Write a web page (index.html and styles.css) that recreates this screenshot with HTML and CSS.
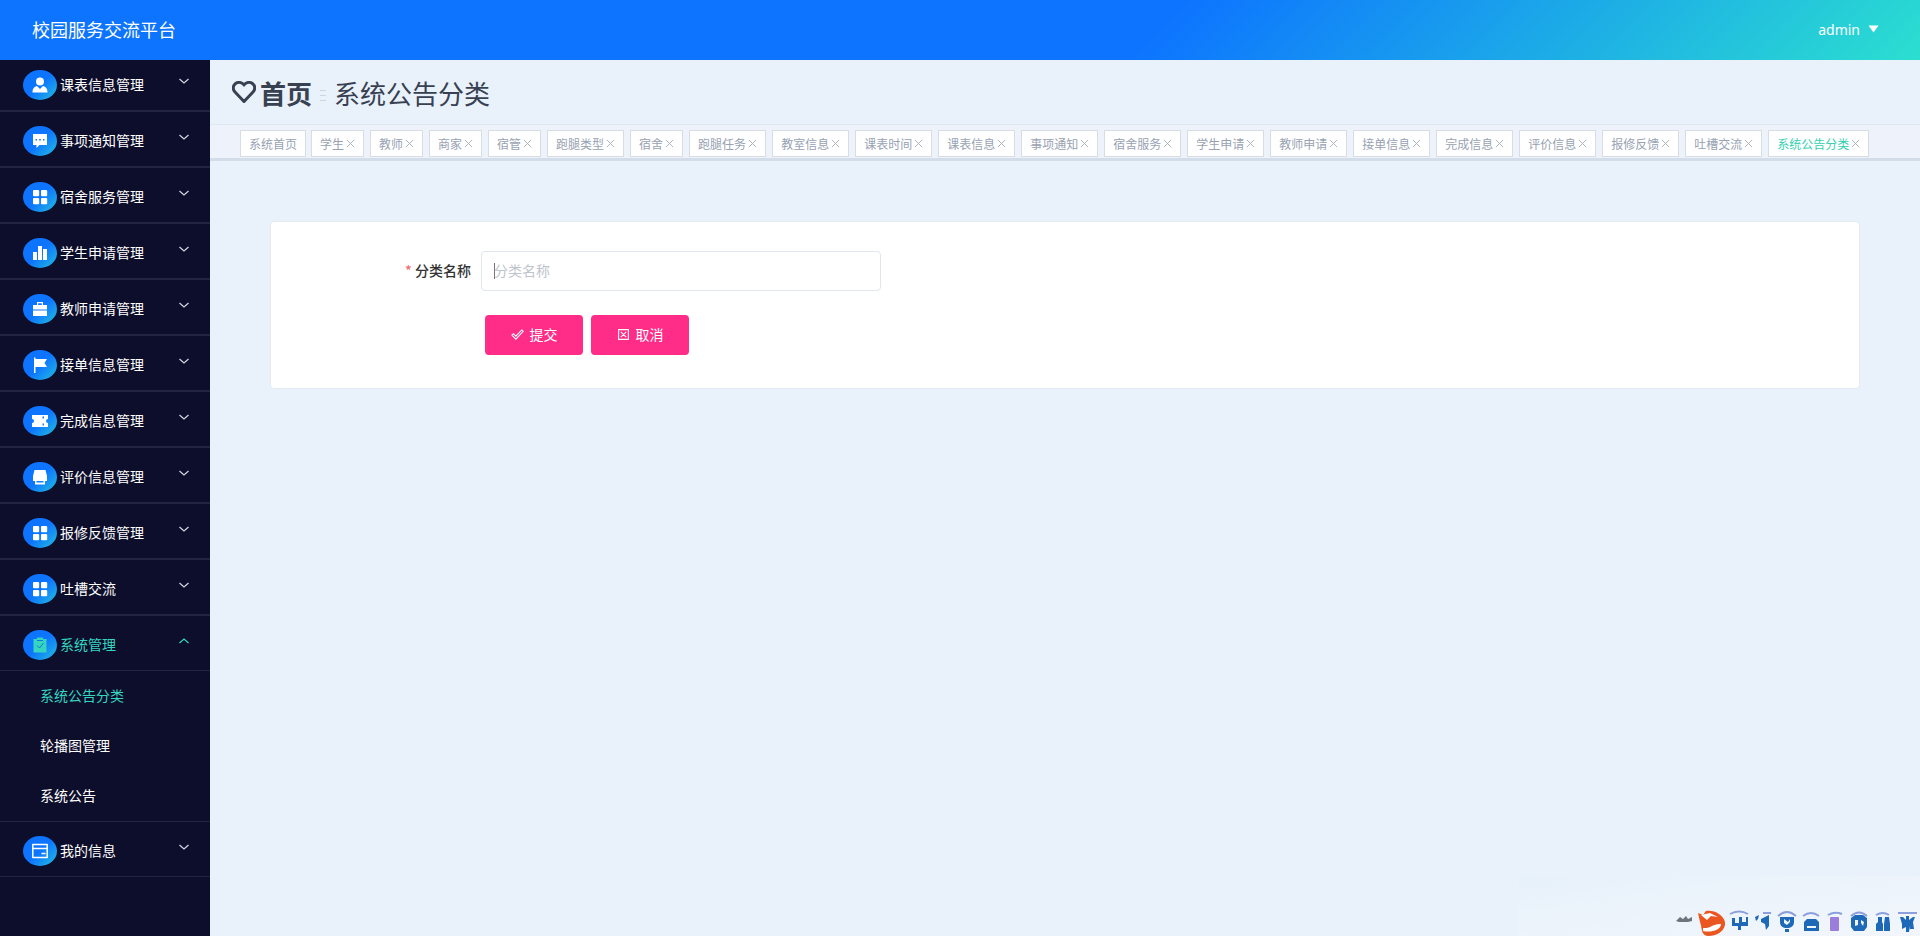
FILE: index.html
```html
<!DOCTYPE html>
<html lang="zh">
<head>
  <meta charset="UTF-8">
  <title>校园服务交流平台</title>
  <link rel="stylesheet" href="styles.css">
</head>
<body>
  <svg class="sprite">
    <symbol id="i-down" viewBox="0 0 12 12"><path d="M1.5 4 6 8 10.5 4" fill="none" stroke="currentColor" stroke-width="1.2"/></symbol>
    <symbol id="i-up" viewBox="0 0 12 12"><path d="M1.5 8 6 4 10.5 8" fill="none" stroke="currentColor" stroke-width="1.2"/></symbol>
    <symbol id="i-user" viewBox="0 0 16 16"><circle cx="8" cy="4.5" r="4"/><path d="M.5 15.500c0-4 2-6 4.500-6.500l3 3 3-3c2.500.5 4.500 2.500 4.500 6.500z"/></symbol>
    <symbol id="i-chat" viewBox="0 0 16 16"><path fill-rule="evenodd" d="M1 1h14v11H7.500L4.500 15v-3H1zM3.500 6v1.500H5V6zm3.700 0v1.500h1.600V6zM11 6v1.500h1.500V6z"/></symbol>
    <symbol id="i-grid" viewBox="0 0 16 16"><rect x="1" y="1" width="6.2" height="6.2" rx="1"/><rect x="9" y="1" width="6.2" height="6.2" rx="1"/><rect x="1" y="9" width="6.2" height="6.2" rx="1"/><rect x="9" y="9" width="6.2" height="6.2" rx="1"/></symbol>
    <symbol id="i-chart" viewBox="0 0 16 16"><path d="M1 7h4v8H1zM6 1h4v14H6zM11 4h4v11h-4z"/></symbol>
    <symbol id="i-bag" viewBox="0 0 16 16"><path fill-rule="evenodd" d="M5 1h6v3h4v4.500H1V4h4zm1.200 1.200V4h3.600V2.200zM1 9.500h14V15H1z"/></symbol>
    <symbol id="i-flag" viewBox="0 0 16 16"><path d="M2 .5h1.500V2H15l-2.500 4L15 10H3.500v6H2z"/></symbol>
    <symbol id="i-ticket" viewBox="0 0 16 16"><path fill-rule="evenodd" d="M0 2h16v4a2 2 0 0 0 0 4v4H0v-4a2 2 0 0 0 0-4zm10.500 1.500v2H12v-2zm0 7v2H12v-2z"/></symbol>
    <symbol id="i-print" viewBox="0 0 16 16"><path fill-rule="evenodd" d="M2.500 1h11L15 7v5h-2v3.500H3V12H1V7zM4.500 12v1.500h7V12z"/></symbol>
    <symbol id="i-claim" viewBox="0 0 16 16"><path d="M1.500 2H5V.5h6V2h3.500v13.500h-13z"/><path d="M5 8.500l2.500 2.500L11.500 6M5 3.500h6" fill="none" stroke="#1377d8"/></symbol>
    <symbol id="i-card" viewBox="0 0 16 16"><path d="M.8 1.500h14.400v13H.8zM.8 5.500h14.400M9.500 10.500h4" fill="none" stroke="currentColor" stroke-width="1.5" stroke-linejoin="round"/></symbol>
    <symbol id="i-x" viewBox="0 0 10 10"><path d="M1 1l8 8M9 1 1 9" fill="none" stroke="currentColor"/></symbol>
  </svg>

  <header class="header">
    <div class="logo">校园服务交流平台</div>
    <button class="user">admin <svg class="caret" viewBox="0 0 10 8"><path d="M0 .5h10L5 7.500z"/></svg></button>
  </header>

  <div class="layout">
    <nav class="sidebar">
      <ul class="menu" id="menu"></ul>
    </nav>

    <main class="main">
      <div class="crumb">
        <svg class="heart" viewBox="0 0 24 22"><path d="M12 20.500 3 11C.5 8.500.8 4.800 3.200 2.800 6 .6 9.500 1 12 3.800c2.500-2.800 6-3.200 8.800-1 2.400 2 2.700 5.700.2 8.200z"/></svg>
        <b>首页</b>
        <span class="dots"></span>
        <span>系统公告分类</span>
      </div>
      <div class="tabs" id="tabs"></div>

      <form class="card">
        <div class="field">
          <label for="name"><i>*</i> 分类名称</label>
          <input id="name" type="text" placeholder="分类名称">
        </div>
        <div class="actions">
          <button type="button"><svg viewBox="0 0 12 12"><path d="M.8 6.500 2.300 5.200 4.500 7.500 10 1.800 11.300 3 4.500 10.300z"/></svg>提交</button>
          <button type="button"><svg viewBox="0 0 12 12"><path d="M1.500 1.500h9v9h-9zM3.500 3.500l5 5M8.500 3.500l-5 5"/></svg>取消</button>
        </div>
      </form>
    </main>
  </div>

  <div class="tray">
    <svg viewBox="0 0 250 30">
      <path d="M6 15l4-4 3 2 3-3 2 3 4-2v4l-4 1H9z" fill="#6d757c"/>
      <path d="M28 7l5 2 3-4c9-1 17 4 19 11 1 8-7 14-17 14-7 0-6-9-8-14z" fill="#ea5520"/>
      <path d="M33 22c7 1 11-5 18-4 0 6-10 9-18 7zM31 9l9-2 8 4-7-1-4 4z" fill="#fff"/>
      <g fill="none" stroke="#8a9fdb" stroke-width="2">
        <path d="M60 8q9-5 18 0M93 7h8M108 10q9-8 18 0M133 10q8-6 16 0M158 9q7-4 14-1M181 10q8-7 16 0M206 9q7-4 13 0M228 7h19"/>
      </g>
      <g fill="#1d69b8">
        <path d="M62 12h3v5h4v-6h3v5h4v-5h2v9h-7v4h-3v-4h-6z"/>
        <path d="M85 11l4-2-1 4-2 2zM91 13l8-4v11l-3 4-1-6-4-2z"/>
        <path fill-rule="evenodd" d="M110 11h14v5c0 4-3 6-7 6s-7-2-7-6zm4 2v4l3 2 3-3v-3l-2 3zM115 23h4v3h-4z"/>
        <path fill-rule="evenodd" d="M134 16l3-3h9l3 3v9h-15zm3 4v2h9v-2z"/>
        <path fill-rule="evenodd" d="M181 12l4-3h8l4 3v9l-3 4h-10l-3-4zm4 2v6l3-1v-5zm6 0v3l2 3 1-4z"/>
        <path d="M208 11h4v5l1 2v7h-7v-7l2-2zM215 11h4l1 7v7h-6v-7z"/>
        <path d="M230 11h3l3 3v-4h3v4l4-3h2l-2 5 1 7h-4v-3l-1 6h-3v-5l-4 2v-5z"/>
      </g>
      <rect x="160" y="11" width="9" height="14" rx="1" fill="#9b7ddb"/>
    </svg>
  </div>

  <script src="script.js"></script>
</body>
</html>
```

FILE: styles.css
```css
* {
  box-sizing: border-box;
}

body {
  margin: 0;
  min-height: 100vh;
  display: flex;
  flex-direction: column;
  font-family: "Noto Sans CJK SC", sans-serif;
  font-size: 14px;
  background-color: #e9f1fb;
  color: #333;
}

button {
  border: none;
  font-family: inherit;
  font-size: 14px;
  color: white;
  cursor: pointer;
}

.sprite {
  display: none;
}

.header {
  height: 60px;
  padding: 0 41px 2px 32px;
  display: flex;
  align-items: center;
  justify-content: space-between;
  background: linear-gradient(135deg, #0d74ff 60%, #2bdfd0 100%);
  color: white;
}

.logo {
  font-size: 18px;
}

.user {
  display: flex;
  align-items: center;
  gap: 8px;
  padding: 0;
  background: none;
  font-family: "Noto Sans", sans-serif;
}

.caret {
  width: 11px;
  height: 8px;
  fill: currentColor;
}

.layout {
  flex: 1;
  display: flex;
}

/* sidebar */
.sidebar {
  width: 210px;
  background-color: #0d0e2b;
  overflow: hidden;
}

.menu {
  margin: -4px 0 0;
  padding: 0;
  list-style: none;
  color: white;
}

.menu > li {
  border-bottom: 1px solid #23243f;
}

.menu > li:last-child {
  border-bottom: none;
}

.menu-title {
  width: 100%;
  height: 55px;
  padding: 4px 20px 0 23px;
  display: flex;
  align-items: center;
  gap: 3px;
  background: none;
  border-bottom: 1px solid #23243f;
}

.menu-title span {
  padding-bottom: 2px;
}

.menu-title .menu-icon {
  width: 34px;
  height: 30px;
  padding: 0;
  display: flex;
  align-items: center;
  justify-content: center;
  border-radius: 50%;
  background: linear-gradient(135deg, #0d74ff 50%, #2bdfd0 120%);
}

.menu-icon svg {
  width: 16px;
  height: 16px;
  fill: currentColor;
}

.arrow {
  width: 12px;
  height: 12px;
  margin: 0 0 8px auto;
  color: #d5d8e6;
}

.open > .menu-title,
.open .arrow,
.submenu .active {
  color: #35d5c0;
}

.submenu {
  padding: 0;
  list-style: none;
}

.submenu a {
  height: 50px;
  padding: 0 0 2px 40px;
  display: flex;
  align-items: center;
  color: white;
  text-decoration: none;
}

/* content */
.main {
  flex: 1;
  min-width: 0;
}

.crumb {
  height: 65px;
  padding: 0 22px;
  display: flex;
  align-items: center;
  gap: 4px;
  border-bottom: 1px solid #dfe7f3;
  font-size: 26px;
  color: #374152;
}

.heart {
  width: 24px;
  height: 22px;
  fill: none;
  stroke: currentColor;
  stroke-width: 3;
}

.dots {
  width: 6px;
  height: 11px;
  margin: 6px 4px 0;
  border: solid #cdd5e0;
  border-width: 1px 0;
  background: linear-gradient(#cdd5e0, #cdd5e0) center / 100% 1px no-repeat;
}

.tabs {
  height: 36px;
  padding: 5px 30px 0;
  display: flex;
  gap: 6px;
  border-bottom: 3px solid #d3dce9;
  background-color: #edf2fb;
}

.tab {
  height: 27px;
  padding: 0 8px;
  display: flex;
  align-items: center;
  border: 1px solid #d8dce5;
  background-color: white;
  font-size: 12px;
  color: #98a2b3;
  white-space: nowrap;
  text-decoration: none;
}

.tab:first-child {
  margin-right: -1px;
}

.tab svg {
  width: 9px;
  height: 9px;
  margin-left: 2px;
  color: #a5adba;
}

.tab.active {
  color: #35cfb0;
}

.card {
  margin: 60px;
  padding: 29px 30px 33px;
  border: 1px solid #e2eaf4;
  border-radius: 4px;
  background-color: white;
}

.field {
  display: flex;
  align-items: center;
}

.field label {
  width: 180px;
  padding: 0 10px 2px 0;
  text-align: right;
  font-weight: 500;
}

.field i {
  color: #f56c6c;
  font-style: normal;
}

.field input {
  width: 400px;
  height: 40px;
  padding: 0 12px 2px;
  border: 1px solid #e2e6ee;
  border-radius: 4px;
  outline: none;
  font-family: inherit;
  font-size: 14px;
}

/* steady caret while the box is empty */
.field input:placeholder-shown:focus {
  caret-color: transparent;
  background: linear-gradient(#777, #777) 12px center / 1px 16px no-repeat white;
}

.field input::placeholder {
  color: #bfc3cc;
}

.actions {
  margin-top: 24px;
  padding-left: 184px;
  display: flex;
  gap: 8px;
}

.actions button {
  width: 98px;
  height: 40px;
  padding: 0 0 2px;
  display: flex;
  align-items: center;
  justify-content: center;
  gap: 6px;
  border-radius: 4px;
  background-color: #ff2c88;
}

.actions svg {
  width: 13px;
  height: 13px;
  fill: none;
  stroke: currentColor;
}

.tray {
  position: fixed;
  right: 0;
  bottom: 0;
  padding: 30px 0 0 152px;
  background: linear-gradient(to bottom right, #e7f1fa, #f2f6fc);
}

.tray svg {
  display: block;
  width: 250px;
  height: 30px;
}
```

FILE: script.js
```js
const menu = [
  ['user', '课表信息管理'],
  ['chat', '事项通知管理'],
  ['grid', '宿舍服务管理'],
  ['chart', '学生申请管理'],
  ['bag', '教师申请管理'],
  ['flag', '接单信息管理'],
  ['ticket', '完成信息管理'],
  ['print', '评价信息管理'],
  ['grid', '报修反馈管理'],
  ['grid', '吐槽交流'],
  ['claim', '系统管理', ['系统公告分类', '轮播图管理', '系统公告']],
  ['card', '我的信息']
];

const tabs = ['系统首页', '学生', '教师', '商家', '宿管', '跑腿类型', '宿舍', '跑腿任务', '教室信息', '课表时间', '课表信息',
  '事项通知', '宿舍服务', '学生申请', '教师申请', '接单信息', '完成信息', '评价信息', '报修反馈', '吐槽交流', '系统公告分类'];

const current = '系统公告分类';

document.getElementById('menu').innerHTML = menu.map(([icon, name, children]) => `
  <li class="${children ? 'open' : ''}">
    <button class="menu-title">
      <span class="menu-icon"><svg><use href="#i-${icon}"/></svg></span>
      <span>${name}</span>
      <svg class="arrow"><use href="#i-${children ? 'up' : 'down'}"/></svg>
    </button>
    ${children ? `<ul class="submenu">${children.map(c =>
      `<li><a href="#" class="${c === current ? 'active' : ''}">${c}</a></li>`).join('')}</ul>` : ''}
  </li>`).join('');

document.getElementById('tabs').innerHTML = tabs.map((t, i) =>
  `<a href="#" class="tab ${t === current ? 'active' : ''}">${t}${i ? '<svg><use href="#i-x"/></svg>' : ''}</a>`).join('');

document.getElementById('name').focus();
```
